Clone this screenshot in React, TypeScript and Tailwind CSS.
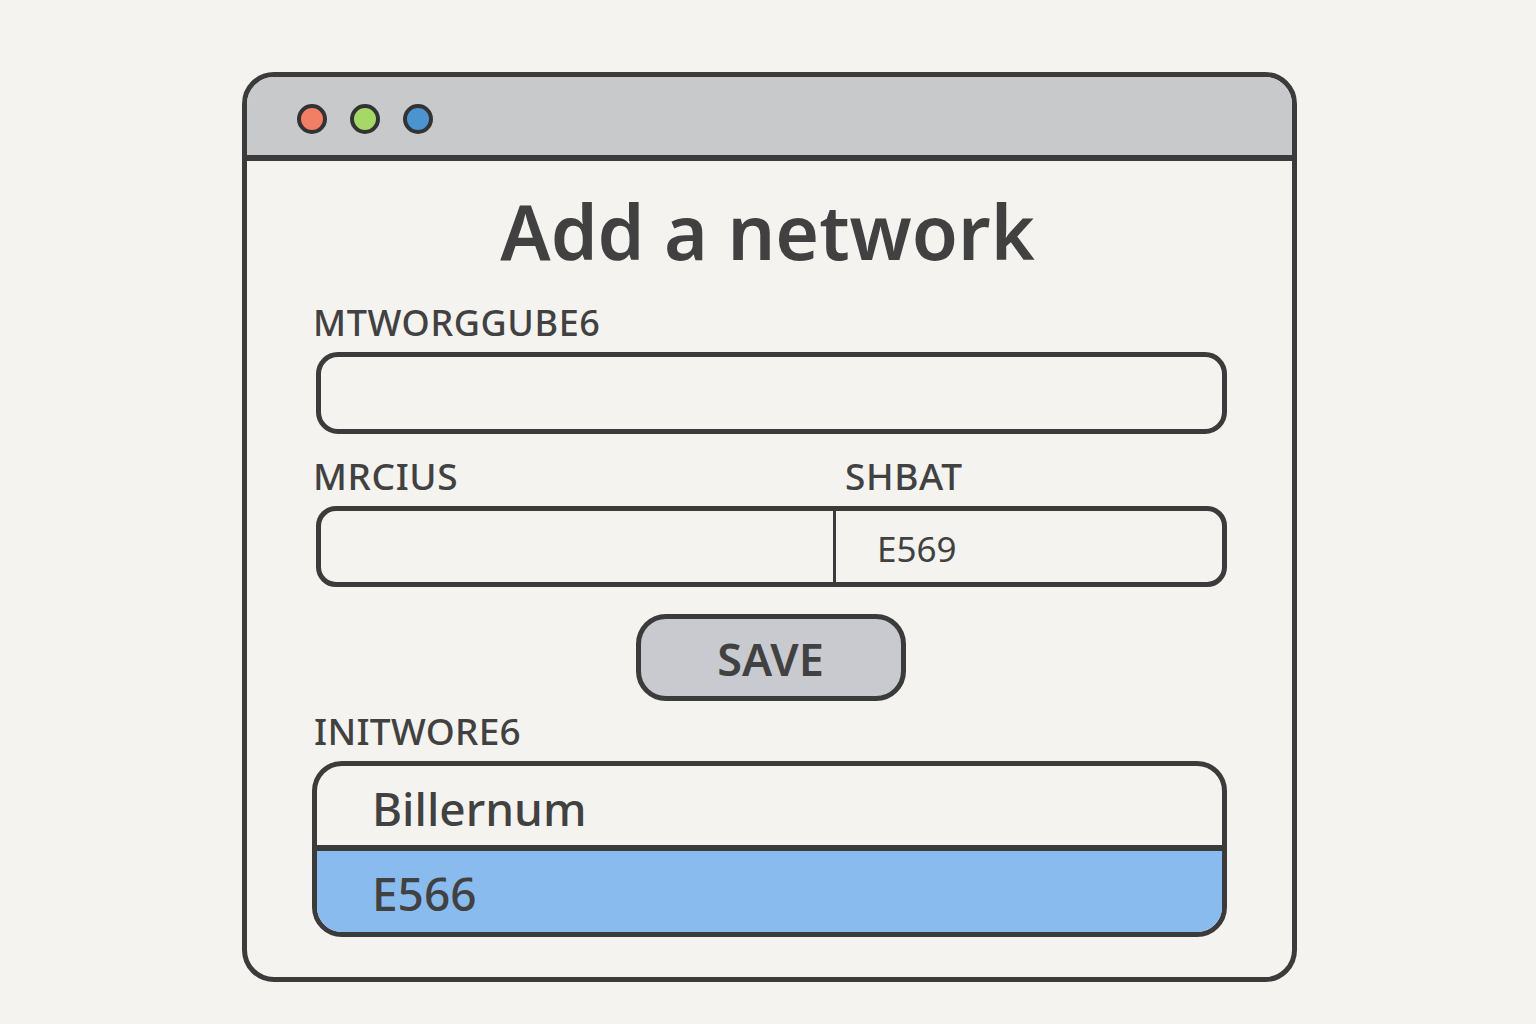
import React from 'react'

const font = "font-['Noto_Sans',sans-serif]"

const Dot = ({ color }: { color: string }) => (
  <span className={`size-[30px] rounded-full border-[4px] border-[#333333] ${color}`} />
)

const App = () => {
  return (
    <div className={`min-h-screen bg-[#f4f3ef] pt-[72px] pl-[242px] text-[#414141] ${font}`}>
      <div className="w-[1055px] h-[910px] flex flex-col border-[5px] border-[#3b3b3b] rounded-[32px] overflow-hidden">
        <header className="h-[84px] shrink-0 flex items-center gap-[23px] pl-[50px] pt-[6px] bg-[#c8c9cb] border-b-[6px] border-[#3b3b3b]">
          <Dot color="bg-[#f27f63]" />
          <Dot color="bg-[#a5d866]" />
          <Dot color="bg-[#4b94d0]" />
        </header>

        <main className="flex-1 flex flex-col pl-[67px] pr-[65px]">
          <h1 className="mt-[20px] h-[100px] text-center text-[75px] leading-[100px] font-semibold pr-[6px]">Add a network</h1>

          <label className="mt-[22px] h-[40px] block text-[36px] leading-[40px] font-medium tracking-[0.6px] -ml-[1px]">MTWORGGUBE6</label>
          <div className="mt-[9px] ml-[2px] h-[82px] border-[5px] border-[#3b3b3b] rounded-[22px]" />

          <div className="mt-[22px] h-[40px] flex text-[37px] leading-[40px] font-medium tracking-[0.6px] -ml-[1px]">
            <span className="w-[532px]">MRCIUS</span>
            <span>SHBAT</span>
          </div>
          <div className="mt-[10px] ml-[2px] h-[81px] flex border-[5px] border-[#3b3b3b] rounded-[20px]">
            <div className="w-[515px] border-r-[3px] border-[#3b3b3b]" />
            <div className="flex-1 flex items-center pl-[41px] pt-[5px] text-[35px]">E569</div>
          </div>

          <button className="mt-[27px] self-center w-[270px] h-[87px] flex items-center justify-center pt-[3px] rounded-[30px] bg-[#c8cacf] border-[5px] border-[#3b3b3b] text-[45px] font-semibold">SAVE</button>

          <label className="mt-[10px] h-[40px] block text-[37px] leading-[40px] font-medium tracking-[0.3px]">INITWORE6</label>
          <div className="mt-[10px] -ml-[2px] h-[176px] flex flex-col border-[5px] border-[#3b3b3b] rounded-[30px] overflow-hidden">
            <div className="h-[85px] shrink-0 flex items-center pl-[55px] pt-[6px] text-[46px] font-medium border-b-[6px] border-[#3b3b3b]">Billernum</div>
            <div className="flex-1 flex items-center pl-[55px] pt-[4px] text-[46px] font-medium bg-[#8abbee]">E566</div>
          </div>
        </main>
      </div>
    </div>
  )
}

export default App
